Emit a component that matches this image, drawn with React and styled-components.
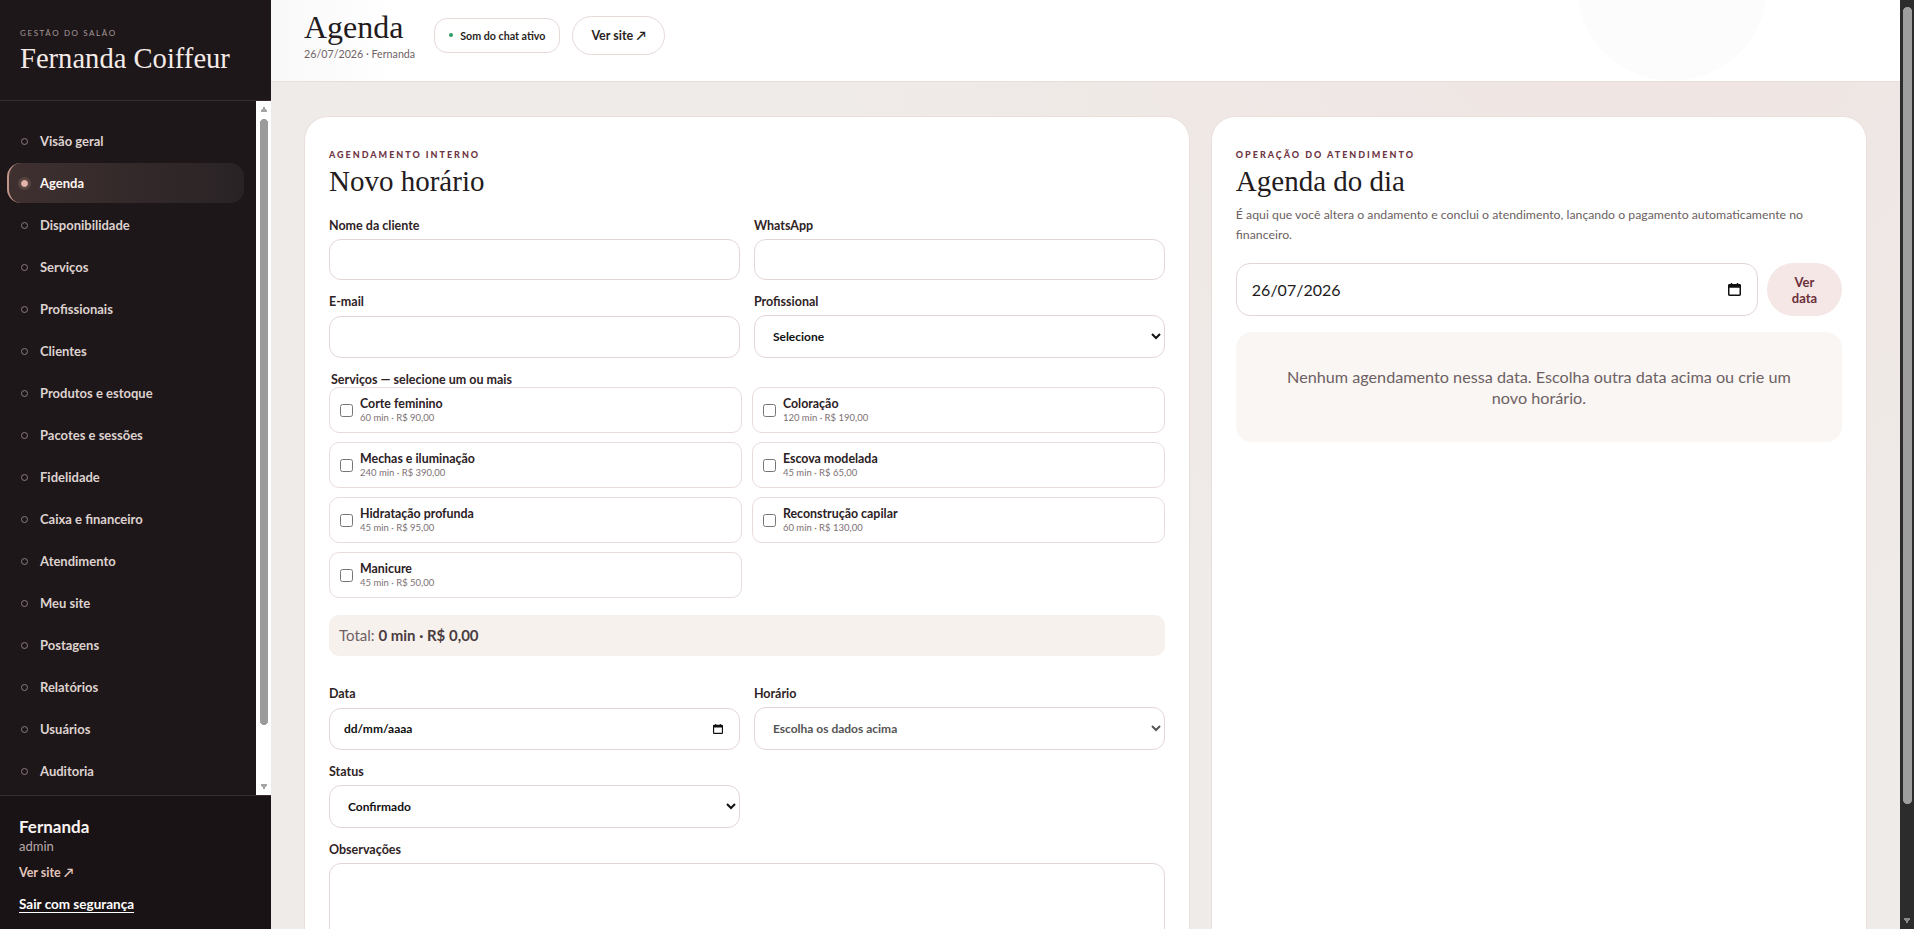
import React from "react";
import styled, { createGlobalStyle } from "styled-components";

// the page scrollbar of the reference (dark track, grey thumb) drawn on the root background
const GlobalStyle = createGlobalStyle`
  * { box-sizing: border-box; }
  html {
    margin: 0;
    background:
      radial-gradient(circle at 4.5px 4.5px, #9e9e9e 4.3px, transparent 4.8px) right 2px top 7px / 9px 9px no-repeat,
      radial-gradient(circle at 4.5px 4.5px, #9e9e9e 4.3px, transparent 4.8px) right 2px top 795px / 9px 9px no-repeat,
      linear-gradient(#9e9e9e, #9e9e9e) right 2px top 11px / 9px 789px no-repeat,
      conic-gradient(from -30deg at 50% 100%, #8a8a8a 0 60deg, transparent 0) right 3px top 918px / 8px 6px no-repeat,
      #2c2c2c;
  }
  body {
    margin: 0 14px 0 0;
    background: #efebe8;
    color: #2b2124;
    font-family: Lato, "Liberation Sans", sans-serif;
  }
`;

const serif = `"Liberation Serif", "DejaVu Serif", serif`;

// Layout
const Shell = styled.div`
  display: grid;
  grid-template-columns: 271px 1fr;
  min-height: 100vh;
`;

const Sidebar = styled.aside`
  position: sticky;
  top: 0;
  height: 100vh;
  display: flex;
  flex-direction: column;
  background: #1e1719;
  color: #f3eae7;
`;

const Brand = styled.div`
  flex: none;
  height: 101px;
  padding: 28px 20px 0;
  border-bottom: 1px solid #372d30;
`;

const BrandEyebrow = styled.div`
  font-size: 8px;
  line-height: 10px;
  letter-spacing: 0.2em;
  text-transform: uppercase;
  color: #a5979a;
`;

const BrandName = styled.div`
  margin-top: 4px;
  font-family: ${serif};
  font-size: 28.6px;
  line-height: 1.2;
  color: #f4ebe8;
`;

const Nav = styled.nav`
  flex: 1;
  min-height: 0;
  overflow-y: auto;
  scrollbar-width: none;
  display: grid;
  grid-auto-rows: 40px;
  align-content: start;
  gap: 2px;
  padding: 20px 27px 67px 7px;
  background:
    conic-gradient(from 150deg at 50% 0, #a3a3a3 0 60deg, transparent 0) right 3.5px top 5px / 8px 6px no-repeat,
    conic-gradient(from -30deg at 50% 100%, #a3a3a3 0 60deg, transparent 0) right 3.5px bottom 5px / 8px 6px no-repeat,
    radial-gradient(circle at 4px 4px, #9b9b9b 3.8px, transparent 4.3px) right 3px top 18px / 8px 8px no-repeat,
    radial-gradient(circle at 4px 4px, #9b9b9b 3.8px, transparent 4.3px) right 3px top 616px / 8px 8px no-repeat,
    linear-gradient(#9b9b9b, #9b9b9b) right 3px top 22px / 8px 598px no-repeat,
    linear-gradient(#ffffff, #ffffff) right top / 15px 100% no-repeat;
`;

const NavItem = styled.a`
  display: flex;
  align-items: center;
  gap: 12px;
  padding-left: 12px;
  border-left: 2px solid ${(p) => (p.$active ? "#c2958a" : "transparent")};
  border-radius: 14px;
  background: ${(p) =>
    p.$active
      ? "linear-gradient(90deg, rgba(194,149,138,0.2), rgba(255,255,255,0.05))"
      : "transparent"};
  font-size: 13px;
  font-weight: 700;
  color: ${(p) => (p.$active ? "#fff6f3" : "#ddd2cf")};
  text-decoration: none;
  cursor: pointer;
`;

const NavDot = styled.span`
  flex: none;
  width: 7px;
  height: 7px;
  border-radius: 50%;
  border: 1px solid ${(p) => (p.$active ? "#e3b5a8" : "#8b7a7e")};
  background: ${(p) => (p.$active ? "#e3b5a8" : "transparent")};
  box-shadow: ${(p) => (p.$active ? "0 0 0 3px rgba(227,181,168,0.16)" : "none")};
`;

const SideFooter = styled.div`
  flex: none;
  border-top: 1px solid #372d30;
  padding: 21px 19px 17px;
  background: #191315;
`;

const UserName = styled.div`
  font-size: 17px;
  line-height: 19px;
  font-weight: 700;
  color: #fbf4f2;
`;

const UserRole = styled.div`
  margin-top: 2px;
  font-size: 13px;
  line-height: 16px;
  color: #b7a9a9;
`;

const SideLink = styled.a`
  display: block;
  margin-top: 12px;
  font-size: 12.5px;
  line-height: 14px;
  font-weight: 700;
  color: #e2c5bb;
  text-decoration: none;
`;

const LogoutButton = styled.button`
  display: block;
  margin-top: 16px;
  padding: 0;
  border: 0;
  background: none;
  font: 700 13.5px/16px Lato, "Liberation Sans", sans-serif;
  color: #ffffff;
  text-decoration: underline;
  text-underline-offset: 3px;
  cursor: pointer;
`;

const Main = styled.main`
  min-width: 0;
  background: radial-gradient(ellipse at 85% 0, #efe5e3 0, rgba(239, 229, 227, 0) 45%), #efebe8;
`;

const Header = styled.header`
  height: 82px;
  display: flex;
  align-items: center;
  gap: 12px;
  padding: 0 33px 11px;
  border-bottom: 1px solid #eadcd9;
  background: radial-gradient(circle at calc(100% - 228px) -15px, #fcfcfd 0 95px, transparent 96px),
    linear-gradient(90deg, #f9f8f8 0, #ffffff 120px);
`;

const TitleBlock = styled.div`
  margin-right: 7px;
`;

const PageTitle = styled.h1`
  margin: 0;
  font-family: ${serif};
  font-weight: 400;
  font-size: 32px;
  line-height: 32px;
  color: #231b1d;
`;

const PageSub = styled.div`
  margin-top: 4px;
  font-size: 10.7px;
  line-height: 13px;
  color: #6f6366;
`;

const StatusPill = styled.div`
  display: inline-flex;
  align-items: center;
  gap: 7px;
  height: 35px;
  padding: 0 14px;
  border: 1px solid #e6dad7;
  border-radius: 13px;
  background: #fff;
  font-size: 10.7px;
  font-weight: 700;
  color: #2a1f22;
`;

const GreenDot = styled.span`
  width: 4px;
  height: 4px;
  border-radius: 50%;
  background: #2f9e62;
`;

const LinkPill = styled.a`
  display: inline-flex;
  align-items: center;
  height: 39px;
  padding: 0 18px;
  border: 1px solid #e6dad7;
  border-radius: 20px;
  background: #fff;
  font-size: 12.5px;
  font-weight: 700;
  color: #2a1f22;
  text-decoration: none;
`;

const Content = styled.div`
  display: grid;
  grid-template-columns: 1.35fr 1fr;
  gap: 21px;
  padding: 34px 33px 33px;
`;

const Card = styled.section`
  min-width: 0;
  padding: 32px 24px 26px;
  border: 1px solid #ebdfdc;
  border-radius: 24px;
  background: #ffffff;
`;

const Eyebrow = styled.div`
  font-size: 9px;
  line-height: 11px;
  font-weight: 900;
  letter-spacing: 0.22em;
  text-transform: uppercase;
  color: #6f3644;
`;

const CardTitle = styled.h2`
  margin: 5px 0 0;
  font-family: ${serif};
  font-weight: 400;
  font-size: 29px;
  line-height: 33px;
  color: #231b1d;
`;

const FormGrid = styled.form`
  margin-top: 20px;
  display: grid;
  grid-template-columns: 1fr 1fr;
  gap: 14px;
`;

const Field = styled.label`
  display: grid;
  gap: 6px;
  grid-column: ${(p) => (p.$wide ? "1 / -1" : "auto")};
`;

const LabelText = styled.span`
  font-size: 12.5px;
  line-height: 15px;
  font-weight: 700;
  color: #2f2326;
`;

const controlBase = `
  width: 100%;
  padding: 12px 14px;
  border: 1px solid #e3d6d4;
  border-radius: 12px;
  background: #fff;
  font: 700 12px Lato, "Liberation Sans", sans-serif;
  color: #111;
  outline: none;
`;

const TextInput = styled.input`
  ${controlBase}
`;

const Select = styled.select`
  ${controlBase}
  &:disabled {
    color: #555;
    opacity: 1;
  }
`;

const TextArea = styled.textarea`
  ${controlBase}
  height: 92px;
  resize: vertical;
`;

// date fields: text input + calendar glyph, so the day/month order reads as pt-BR
const DateBox = styled.div`
  display: flex;
  align-items: center;
  gap: 8px;
  height: ${(p) => (p.$big ? "53px" : "42px")};
  padding-right: 16px;
  border: 1px solid #e3d6d4;
  border-radius: ${(p) => (p.$big ? "14px" : "12px")};
  background: #fff;
  flex: ${(p) => (p.$big ? "1" : "none")};
  min-width: 0;

  svg {
    flex: none;
    width: ${(p) => (p.$big ? "13px" : "10px")};
    height: ${(p) => (p.$big ? "13px" : "10px")};
  }
`;

const DateText = styled.input`
  flex: 1;
  min-width: 0;
  height: 100%;
  padding: 0 ${(p) => (p.$big ? "15px" : "14px")};
  border: 0;
  border-radius: inherit;
  outline: none;
  background: transparent;
  font: ${(p) => (p.$big ? "400 16px" : "700 12px")} Lato, "Liberation Sans", sans-serif;
  color: ${(p) => (p.$big ? "#221a1c" : "#111")};

  &::placeholder {
    color: #111;
    opacity: 1;
  }
`;

const Fieldset = styled.fieldset`
  grid-column: 1 / -1;
  margin: 0;
  padding: 0;
  border: 0;
  min-width: 0;
`;

const Legend = styled.legend`
  padding: 0 2px;
  font-size: 12.5px;
  line-height: 15px;
  font-weight: 700;
  color: #2f2326;
`;

const ServiceGrid = styled.div`
  display: grid;
  grid-template-columns: 1fr 1fr;
  gap: 9px 10px;
`;

const ServiceCard = styled.label`
  display: flex;
  align-items: center;
  gap: 7px;
  padding: 8px 10px;
  border: 1px solid #e8dcda;
  border-radius: 10px;
  background: #fff;
  cursor: pointer;

  input {
    margin: 0;
    width: 13px;
    height: 13px;
  }
`;

const ServiceName = styled.div`
  font-size: 12.4px;
  line-height: 15px;
  font-weight: 700;
  color: #2c2124;
`;

const ServiceMeta = styled.div`
  font-size: 9.5px;
  line-height: 13px;
  color: #7d7174;
`;

const TotalBar = styled.div`
  grid-column: 1 / -1;
  margin: 3px 0 16px;
  padding: 10px;
  border-radius: 10px;
  background: #f7f1ed;
  font-size: 15px;
  line-height: 21px;
  color: #6d6164;

  strong {
    color: #4a3c40;
  }
`;

const Actions = styled.div`
  grid-column: 1 / -1;
  display: flex;
  justify-content: flex-end;
`;

const PrimaryButton = styled.button`
  height: 44px;
  padding: 0 26px;
  border: 0;
  border-radius: 22px;
  background: #5e2632;
  font: 700 13px Lato, "Liberation Sans", sans-serif;
  color: #fff;
`;

const Description = styled.p`
  margin: 7px 0 0;
  font-size: 12.3px;
  line-height: 20px;
  color: #6b5f62;
`;

const DateRow = styled.div`
  margin-top: 18px;
  display: flex;
  gap: 9px;
`;

const RoundButton = styled.button`
  flex: none;
  width: 75px;
  padding: 0 16px;
  border: 0;
  border-radius: 999px;
  background: #f4e7e5;
  font: 700 13px/16px Lato, "Liberation Sans", sans-serif;
  color: #6d2f3a;
  cursor: pointer;
`;

const EmptyState = styled.div`
  margin-top: 16px;
  padding: 34px 40px;
  border-radius: 16px;
  background: #faf6f3;
  text-align: center;
  font-size: 16.2px;
  line-height: 21px;
  color: #6d6164;
`;

const CalendarIcon = () => (
  <svg viewBox="0 0 14 14" aria-hidden="true">
    <path
      fill="#111"
      fillRule="evenodd"
      d="M3 0v1H1.5A1.5 1.5 0 0 0 0 2.5v10A1.5 1.5 0 0 0 1.5 14h11a1.5 1.5 0 0 0 1.5-1.5v-10A1.5 1.5 0 0 0 12.5 1H11V0H9.5v1h-5V0zM1.6 5h10.8v7.4H1.6z"
    />
  </svg>
);

const navItems = [
  "Visão geral",
  "Agenda",
  "Disponibilidade",
  "Serviços",
  "Profissionais",
  "Clientes",
  "Produtos e estoque",
  "Pacotes e sessões",
  "Fidelidade",
  "Caixa e financeiro",
  "Atendimento",
  "Meu site",
  "Postagens",
  "Relatórios",
  "Usuários",
  "Auditoria",
];

const services = [
  { name: "Corte feminino", min: 60, price: "90,00" },
  { name: "Coloração", min: 120, price: "190,00" },
  { name: "Mechas e iluminação", min: 240, price: "390,00" },
  { name: "Escova modelada", min: 45, price: "65,00" },
  { name: "Hidratação profunda", min: 45, price: "95,00" },
  { name: "Reconstrução capilar", min: 60, price: "130,00" },
  { name: "Manicure", min: 45, price: "50,00" },
];

export default function App() {
  return (
    <>
      <GlobalStyle />
      <Shell>
        <Sidebar>
          <Brand>
            <BrandEyebrow>Gestão do salão</BrandEyebrow>
            <BrandName>Fernanda Coiffeur</BrandName>
          </Brand>
          <Nav>
            {navItems.map((item) => (
              <NavItem key={item} $active={item === "Agenda"}>
                <NavDot $active={item === "Agenda"} />
                {item}
              </NavItem>
            ))}
          </Nav>
          <SideFooter>
            <UserName>Fernanda</UserName>
            <UserRole>admin</UserRole>
            <SideLink>Ver site ↗</SideLink>
            <LogoutButton>Sair com segurança</LogoutButton>
          </SideFooter>
        </Sidebar>

        <Main>
          <Header>
            <TitleBlock>
              <PageTitle>Agenda</PageTitle>
              <PageSub>26/07/2026 · Fernanda</PageSub>
            </TitleBlock>
            <StatusPill>
              <GreenDot />
              Som do chat ativo
            </StatusPill>
            <LinkPill>Ver site ↗</LinkPill>
          </Header>

          <Content>
            <Card>
              <Eyebrow>Agendamento interno</Eyebrow>
              <CardTitle>Novo horário</CardTitle>
              <FormGrid onSubmit={(e) => e.preventDefault()}>
                <Field>
                  <LabelText>Nome da cliente</LabelText>
                  <TextInput type="text" />
                </Field>
                <Field>
                  <LabelText>WhatsApp</LabelText>
                  <TextInput type="tel" />
                </Field>
                <Field>
                  <LabelText>E-mail</LabelText>
                  <TextInput type="email" />
                </Field>
                <Field>
                  <LabelText>Profissional</LabelText>
                  <Select defaultValue="">
                    <option value="">Selecione</option>
                    <option value="fernanda">Fernanda</option>
                  </Select>
                </Field>

                <Fieldset>
                  <Legend>Serviços — selecione um ou mais</Legend>
                  <ServiceGrid>
                    {services.map((s) => (
                      <ServiceCard key={s.name}>
                        <input type="checkbox" />
                        <div>
                          <ServiceName>{s.name}</ServiceName>
                          <ServiceMeta>
                            {s.min} min · R$ {s.price}
                          </ServiceMeta>
                        </div>
                      </ServiceCard>
                    ))}
                  </ServiceGrid>
                </Fieldset>

                <TotalBar>
                  Total: <strong>0 min · R$ 0,00</strong>
                </TotalBar>

                <Field>
                  <LabelText>Data</LabelText>
                  <DateBox>
                    <DateText type="text" placeholder="dd/mm/aaaa" />
                    <CalendarIcon />
                  </DateBox>
                </Field>
                <Field>
                  <LabelText>Horário</LabelText>
                  <Select disabled defaultValue="">
                    <option value="">Escolha os dados acima</option>
                  </Select>
                </Field>
                <Field>
                  <LabelText>Status</LabelText>
                  <Select defaultValue="confirmado">
                    <option value="confirmado">Confirmado</option>
                    <option value="pendente">Pendente</option>
                  </Select>
                </Field>
                <Field $wide>
                  <LabelText>Observações</LabelText>
                  <TextArea />
                </Field>
                <Actions>
                  <PrimaryButton type="submit">Salvar horário</PrimaryButton>
                </Actions>
              </FormGrid>
            </Card>

            <Card>
              <Eyebrow>Operação do atendimento</Eyebrow>
              <CardTitle>Agenda do dia</CardTitle>
              <Description>
                É aqui que você altera o andamento e conclui o atendimento, lançando o pagamento
                automaticamente no financeiro.
              </Description>
              <DateRow>
                <DateBox $big>
                  <DateText $big type="text" defaultValue="26/07/2026" />
                  <CalendarIcon />
                </DateBox>
                <RoundButton>Ver data</RoundButton>
              </DateRow>
              <EmptyState>
                Nenhum agendamento nessa data. Escolha outra data acima ou crie um novo horário.
              </EmptyState>
            </Card>
          </Content>
        </Main>
      </Shell>
    </>
  );
}
